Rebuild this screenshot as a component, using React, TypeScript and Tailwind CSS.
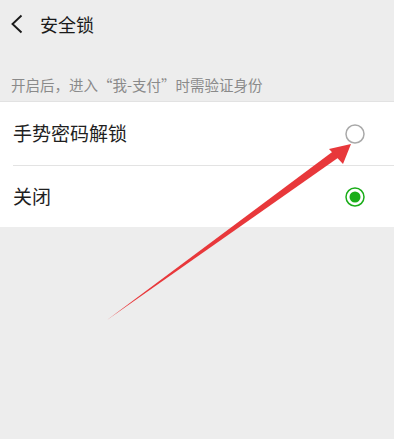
import React from "react";

const font = { fontFamily: '"Noto Sans CJK SC", "Noto Sans", sans-serif' };

function Radio({ checked }: { checked?: boolean }) {
  return (
    <svg width="22" height="22" viewBox="0 0 22 22">
      <circle cx="11" cy="11" r="9" fill="#fff" stroke={checked ? "#1aad19" : "#a9a9a9"} strokeWidth="1.5" />
      {checked && <circle cx="11" cy="11" r="5.5" fill="#1aad19" />}
    </svg>
  );
}

export default function App() {
  return (
    <div className="relative w-[394px] h-[439px] bg-[#ededed] overflow-hidden" style={font}>
      <header className="h-12 flex items-center">
        <svg className="ml-[10px]" width="14" height="20" viewBox="0 0 14 20">
          <path d="M11.5 1.5 L2.5 10 L11.5 18.5" fill="none" stroke="#1a1a1a" strokeWidth="1.9" />
        </svg>
        <h1 className="ml-[16px] text-[18px] text-[#1a1a1a]">安全锁</h1>
      </header>

      <div className="h-[53px] flex items-end pl-[11px] pb-[6px]">
        <p className="text-[14.5px] leading-5 text-[#8a8a8a]">开启后，进入“我-支付”时需验证身份</p>
      </div>

      <section className="bg-white border-t border-[#e2e2e2]">
        <div className="h-[63px] flex items-center justify-between pl-[13px] pr-[28px]">
          <span className="text-[19px] text-[#1f1f1f]">手势密码解锁</span>
          <Radio />
        </div>
        <div className="ml-[13px] h-px bg-[#e3e3e3]" />
        <div className="h-[61px] flex items-center justify-between pl-[13px] pr-[28px]">
          <span className="text-[19px] text-[#1f1f1f]">关闭</span>
          <Radio checked />
        </div>
      </section>

      {/* annotation arrow */}
      <svg className="absolute inset-0 pointer-events-none" width="394" height="439" viewBox="0 0 394 439">
        <polygon points="107,320 333.5,151 338.5,157.5" fill="#e8383b" />
        <polygon points="351,144 329,149 343,164" fill="#e8383b" />
      </svg>
    </div>
  );
}
